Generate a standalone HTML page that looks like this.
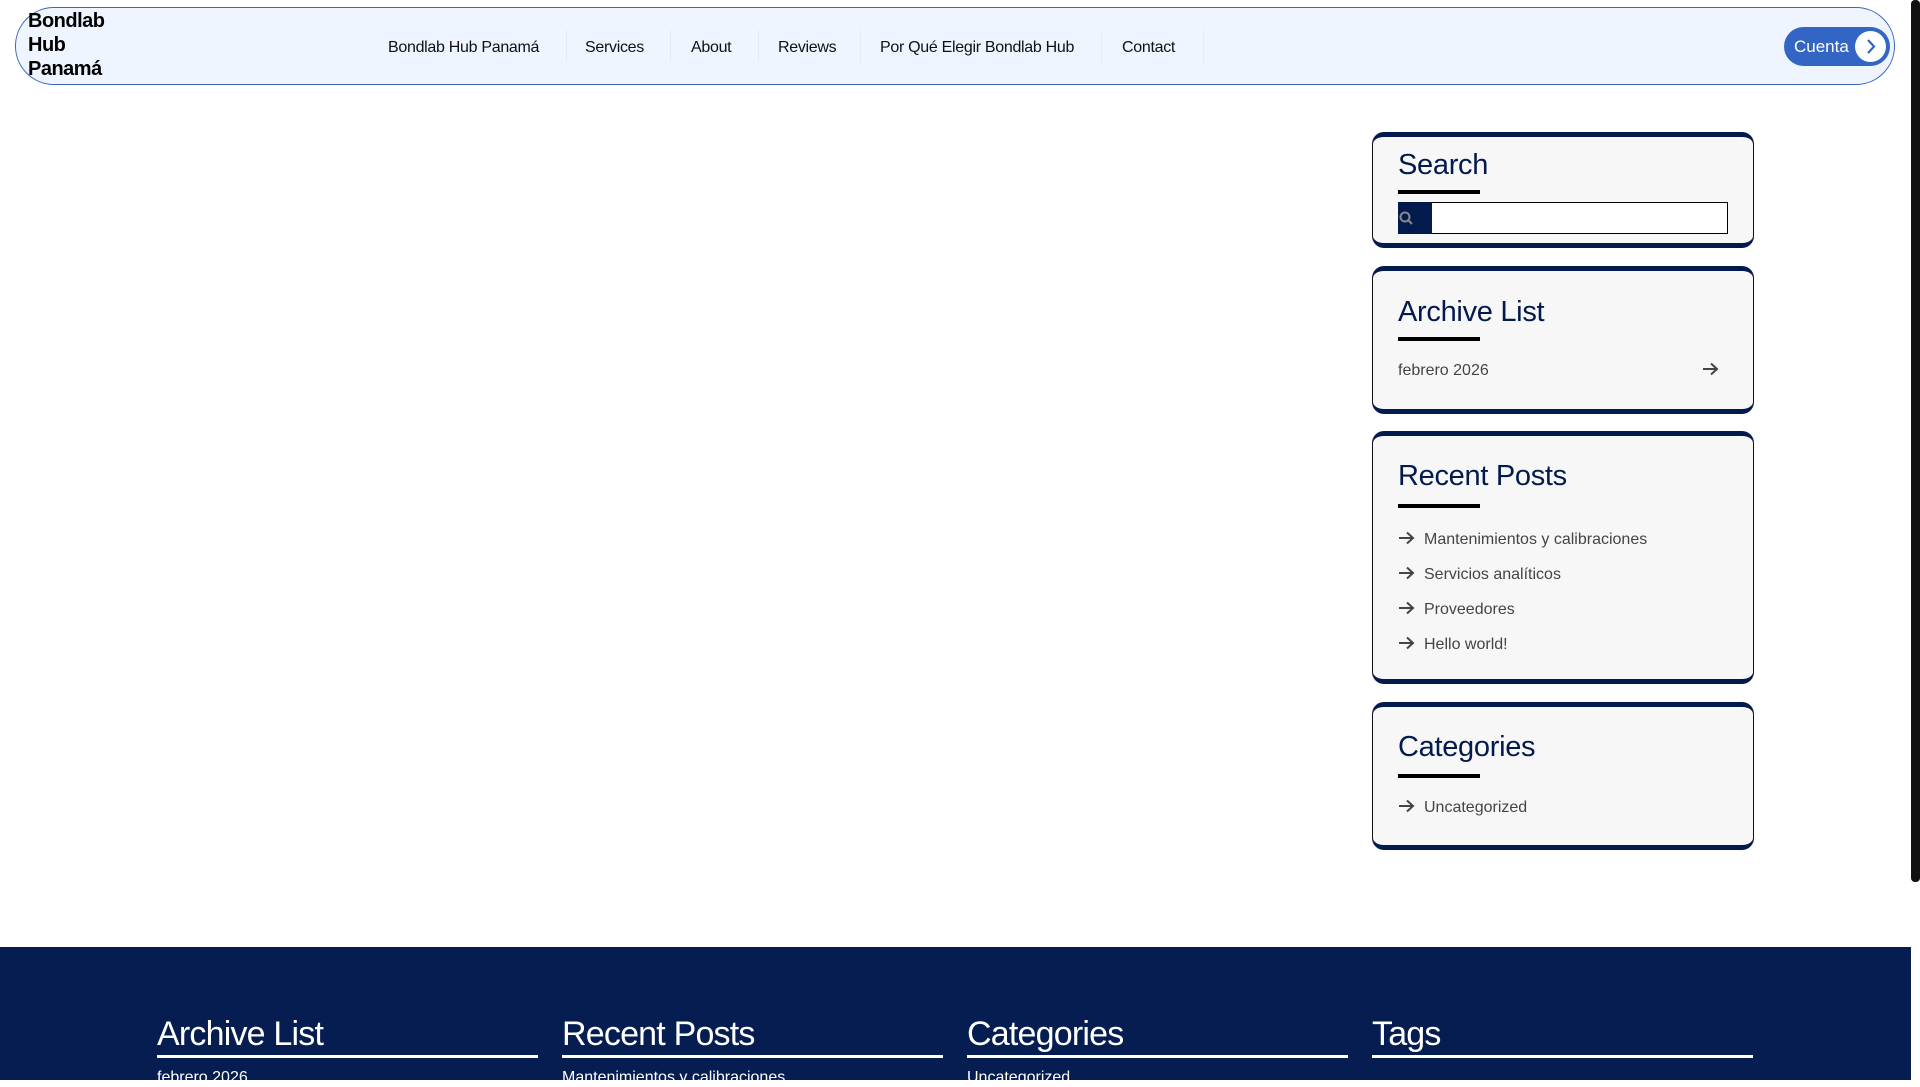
<!DOCTYPE html>
<html><head><meta charset="utf-8"><style>
*{box-sizing:border-box;margin:0;padding:0}
body{width:1920px;height:1080px;overflow:hidden;background:#fff;font-family:"Liberation Sans",sans-serif;position:relative}
.nav{position:absolute;left:15px;top:7px;width:1880px;height:78px;background:#eef5ff;border:1.5px solid #3a68bb;border-radius:40px}
.logo{position:absolute;left:28px;top:9px;font-weight:bold;font-size:20px;line-height:24px;color:#000;letter-spacing:-0.5px}
.menu{position:absolute;top:39px;font-size:16px;color:#111;letter-spacing:-0.3px}
.sep{position:absolute;top:30px;width:1px;height:32px;background:#e6ebf3}
.btn{position:absolute;left:1784px;top:27px;width:106px;height:39px;background:#3366c4;border-radius:20px;color:#fff;font-size:17px}
.btn span{position:absolute;left:10px;top:10px}
.btn i{position:absolute;right:4px;top:4px;width:31px;height:31px;border-radius:50%;background:#fff}
.sb{position:absolute;left:1911px;top:0;width:9px;height:882px;background:#111;border-radius:4px}
.card{position:absolute;left:1372px;width:382px;background:#f7f7f7;border:1.5px solid #111;border-top:5px solid #031a4d;border-bottom:5px solid #031a4d;border-radius:12px}
.card h2{position:absolute;left:25px;font-size:29px;font-weight:normal;color:#031a4d;letter-spacing:-0.3px}
.ul{position:absolute;left:25px;width:82px;height:4px;background:#000}
.li{position:absolute;left:25px;font-size:16px;color:#444}
.li svg{position:absolute;left:0;top:0}
.li span{margin-left:26px}
.foot{position:absolute;left:0;top:947px;width:1911px;height:133px;background:#051d50}
.fc{position:absolute;top:68px;width:381px;color:#fff}
.fc h3{font-size:34px;font-weight:normal;letter-spacing:-0.8px;height:40px}
.fc div{height:3px;background:#fff}
.fc p{font-size:16px;margin-top:11px}
</style></head><body>
<div class="nav"></div>
<div class="logo">Bondlab<br>Hub<br>Panamá</div>
<div class="menu" style="left:388px">Bondlab Hub Panamá</div>
<div class="sep" style="left:566px"></div>
<div class="menu" style="left:585px">Services</div>
<div class="sep" style="left:670px"></div>
<div class="menu" style="left:691px">About</div>
<div class="sep" style="left:758px"></div>
<div class="menu" style="left:778px">Reviews</div>
<div class="sep" style="left:860px"></div>
<div class="menu" style="left:880px">Por Qué Elegir Bondlab Hub</div>
<div class="sep" style="left:1101px"></div>
<div class="menu" style="left:1122px">Contact</div>
<div class="sep" style="left:1203px"></div>
<div class="btn"><span>Cuenta</span><i><svg width="31" height="31" viewBox="0 0 31 31"><path d="M13 9l6 6.5-6 6.5" stroke="#3366c4" stroke-width="2.2" fill="none"/></svg></i></div>
<div class="sb"></div>

<div class="card" style="top:132px;height:116px">
<h2 style="top:12px">Search</h2><div class="ul" style="top:53px"></div>
<div style="position:absolute;left:25px;top:65px;width:330px;height:32px;border:1.5px solid #000;background:#fff"></div>
<div style="position:absolute;left:25px;top:65px;width:34px;height:32px;background:#031a4d"><svg width="20" height="20" viewBox="0 0 20 20" style="position:absolute;left:0;top:7px"><circle cx="7" cy="8" r="4.5" stroke="#888" stroke-width="2" fill="none"/><path d="M10 11l4 4" stroke="#888" stroke-width="2"/></svg></div>
</div>

<div class="card" style="top:266px;height:148px">
<h2 style="top:25px">Archive List</h2><div class="ul" style="top:66px"></div>
<div class="li" style="top:91px">febrero 2026</div>
<div class="li" style="top:91px;left:329px"><svg width="17" height="14" viewBox="0 0 17 14"><path d="M1 7h14M9 1.5L15 7l-6 5.5" stroke="#444" stroke-width="2" fill="none"/></svg></div>
</div>

<div class="card" style="top:431px;height:253px">
<h2 style="top:24px">Recent Posts</h2><div class="ul" style="top:68px"></div>
<div class="li" style="top:95px"><svg width="17" height="14" viewBox="0 0 17 14"><path d="M1 7h14M9 1.5L15 7l-6 5.5" stroke="#444" stroke-width="2" fill="none"/></svg><span>Mantenimientos y calibraciones</span></div>
<div class="li" style="top:130px"><svg width="17" height="14" viewBox="0 0 17 14"><path d="M1 7h14M9 1.5L15 7l-6 5.5" stroke="#444" stroke-width="2" fill="none"/></svg><span>Servicios analíticos</span></div>
<div class="li" style="top:165px"><svg width="17" height="14" viewBox="0 0 17 14"><path d="M1 7h14M9 1.5L15 7l-6 5.5" stroke="#444" stroke-width="2" fill="none"/></svg><span>Proveedores</span></div>
<div class="li" style="top:200px"><svg width="17" height="14" viewBox="0 0 17 14"><path d="M1 7h14M9 1.5L15 7l-6 5.5" stroke="#444" stroke-width="2" fill="none"/></svg><span>Hello world!</span></div>
</div>

<div class="card" style="top:702px;height:148px">
<h2 style="top:24px">Categories</h2><div class="ul" style="top:67px"></div>
<div class="li" style="top:92px"><svg width="17" height="14" viewBox="0 0 17 14"><path d="M1 7h14M9 1.5L15 7l-6 5.5" stroke="#444" stroke-width="2" fill="none"/></svg><span>Uncategorized</span></div>
</div>

<div class="foot">
<div class="fc" style="left:157px"><h3>Archive List</h3><div></div><p>febrero 2026</p></div>
<div class="fc" style="left:562px"><h3>Recent Posts</h3><div></div><p>Mantenimientos y calibraciones</p></div>
<div class="fc" style="left:967px"><h3>Categories</h3><div></div><p>Uncategorized</p></div>
<div class="fc" style="left:1372px"><h3>Tags</h3><div></div></div>
</div>
</body></html>
